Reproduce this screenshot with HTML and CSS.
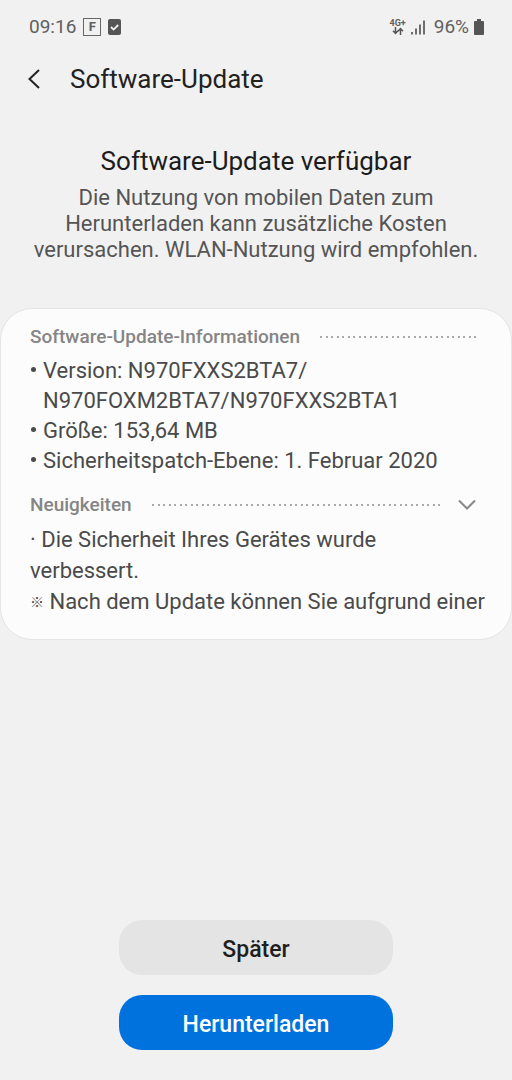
FILE: index.html
```html
<!DOCTYPE html>
<html lang="de">
<head>
<meta charset="utf-8">
<meta name="viewport" content="width=device-width, initial-scale=1">
<title>Software-Update</title>
<link rel="stylesheet" href="styles.css">
</head>
<body>
<div class="status-bar">
  <div class="status-group">
    <span>09:16</span>
    <span class="app-badge">F</span>
    <svg class="icon-check" width="13" height="16" viewBox="0 0 13 16" aria-hidden="true"><rect width="13" height="16" rx="2" fill="#555"/><path d="M3 8l2.6 2.6L10.2 6" fill="none" stroke="#f2f2f2" stroke-width="1.8"/></svg>
  </div>
  <div class="status-group status-right">
    <span class="network"><span>4G+</span><svg width="12" height="8" viewBox="0 0 12 8" aria-hidden="true"><path d="M3.500 0v6M1 3.800l2.500 2.600L6 3.800M8.500 8V2M6 4.200l2.500-2.600L11 4.200" fill="none" stroke="#555" stroke-width="1.500"/></svg></span>
    <svg class="icon-signal" width="14" height="15" viewBox="0 0 14 15" aria-hidden="true"><path d="M1 12v2.500M5 8.500v6M9 4.500v10M13 0.500v14" stroke="#606060" stroke-width="1.800"/></svg>
    <span class="percent">96%</span>
    <svg width="10" height="16" viewBox="0 0 10 16" aria-hidden="true"><path d="M3 0h4v2h2q1 0 1 1v12q0 1-1 1H1q-1 0-1-1V3q0-1 1-1h2z" fill="#555"/></svg>
  </div>
</div>
<header class="app-bar">
  <button class="back" type="button" aria-label="Zurück"><svg width="12" height="20" viewBox="0 0 12 20" aria-hidden="true"><path d="M11 1L1.500 10l9.500 9" fill="none" stroke="#222" stroke-width="2"/></svg></button>
  <h1 class="page-title">Software-Update</h1>
</header>
<main class="content">
  <section class="intro">
    <h2 class="intro-title">Software-Update verfügbar</h2>
    <p class="intro-text">Die Nutzung von mobilen Daten zum Herunterladen kann zusätzliche Kosten verursachen. WLAN-Nutzung wird empfohlen.</p>
  </section>
  <section class="card">
    <div class="section-head">
      <h3 class="section-title">Software-Update-Informationen</h3>
      <span class="dots"></span>
    </div>
    <ul class="info">
      <li>Version: N970FXXS2BTA7/<wbr>N970FOXM2BTA7/N970FXXS2BTA1</li>
      <li>Größe: 153,64 MB</li>
      <li>Sicherheitspatch-Ebene: 1. Februar 2020</li>
    </ul>
    <div class="section-head">
      <h3 class="section-title">Neuigkeiten</h3>
      <span class="dots"></span>
      <button class="expand" type="button" aria-label="Neuigkeiten anzeigen"><svg width="18" height="12" viewBox="0 0 18 12" aria-hidden="true"><path d="M1 1.500l8 8 8-8" fill="none" stroke="#888" stroke-width="2"/></svg></button>
    </div>
    <div class="news">
      <p>· Die Sicherheit Ihres Gerätes wurde verbessert.</p>
      <p class="note"><span class="note-mark">※</span> Nach dem Update können Sie aufgrund einer</p>
    </div>
  </section>
</main>
<footer class="actions">
  <button class="action later" type="button">Später</button>
  <button class="action download" type="button">Herunterladen</button>
</footer>
</body>
</html>
```
FILE: styles.css
```css
* { box-sizing: border-box; }
body {
  display: flex;
  flex-direction: column;
  min-height: 100vh;
  margin: 0;
  background: #f1f1f1;
  color: #4a4a4a;
  font-family: Roboto, sans-serif;
  font-size: 22px;
}
h1, h2, h3, p, ul { margin: 0; padding: 0; font-weight: 400; }
button { padding: 0; border: 0; background: none; font: inherit; cursor: pointer; }
svg { display: block; flex: none; }
.status-bar {
  display: flex;
  justify-content: space-between;
  padding: 12px 28px 0 29px;
  color: #606060;
  font-size: 19px;
  line-height: 30px;
}
.status-group { display: flex; align-items: center; gap: 7px; }
.status-right { gap: 5px; }
.app-badge {
  width: 18px;
  height: 18px;
  border: 1px solid #666;
  font-size: 13px;
  font-weight: 700;
  line-height: 16px;
  text-align: center;
}
.network { display: flex; flex-direction: column; align-items: center; font-size: 9px; font-weight: 700; line-height: 8px; }
.percent { margin-left: 4px; }
.app-bar { display: flex; align-items: center; padding: 17px 28px 0; }
.back { width: 42px; }
.page-title { color: #222; font-size: 26px; line-height: 40px; }
.content { flex: 1; }
.intro { padding: 45px 32px; text-align: center; }
.intro-title { color: #1c1c1c; font-size: 26px; line-height: 34px; }
.intro-text { margin-top: 7px; color: #555; line-height: 26px; }
.card {
  padding: 13px 29px 22px;
  border: 1px solid #e4e4e4;
  border-radius: 32px;
  background: #fcfcfc;
}
.section-head { display: flex; align-items: center; gap: 20px; padding-right: 3px; }
.section-title { color: #858585; font-size: 19px; font-weight: 500; line-height: 30px; }
.dots {
  flex: 1;
  height: 2px;
  background: repeating-linear-gradient(90deg, #aaa 0 2px, transparent 2px 6px, #aaa 6px 8px, transparent 8px 11px);
}
.expand { margin: 0 3px 0 -6px; }
.info { padding: 4px 0 14px; list-style: none; line-height: 30px; }
.info li { padding-left: 13px; text-indent: -13px; }
.info li::before {
  content: "";
  display: inline-block;
  width: 5px;
  height: 5px;
  margin: 0 7px 0 1px;
  border-radius: 50%;
  background: #4a4a4a;
  vertical-align: 6px;
}
.news { padding-top: 4px; line-height: 31px; }
.note { white-space: nowrap; }
.note-mark {
  display: inline-block;
  font-family: "Noto Sans CJK JP", sans-serif;
  font-size: 14px;
  font-weight: 700;
  line-height: 1;
  vertical-align: 2px;
}
.actions {
  display: flex;
  flex-direction: column;
  align-items: center;
  gap: 20px;
  padding: 20px 28px 30px;
}
.action {
  width: 60%;
  height: 55px;
  padding-top: 3px;
  border-radius: 23px;
  font-size: 23px;
  font-weight: 500;
}
.later { background: #e4e4e4; color: #1e1e1e; }
.download { background: #0072de; color: #fff; }
```
